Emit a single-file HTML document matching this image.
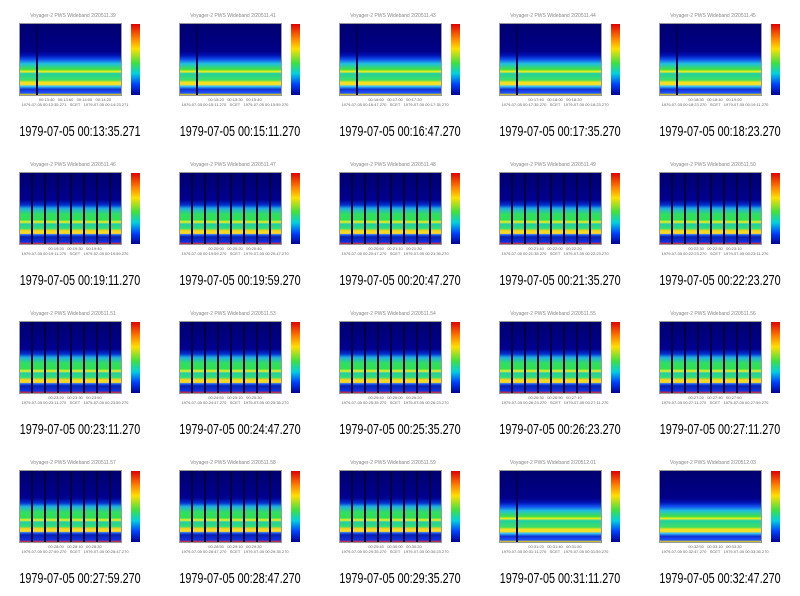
<!DOCTYPE html>
<html><head><meta charset="utf-8"><style>
body{margin:0;width:800px;height:596px;background:#fff;position:relative;overflow:hidden;font-family:"Liberation Sans",sans-serif}
.cell{position:absolute;width:160px;height:149px}
.t{position:absolute;top:13px;left:28px;width:90px;text-align:center;font-size:5px;color:#888;white-space:nowrap}
.p{position:absolute;left:20px;top:24px;width:101px;height:71px;outline:1px solid #999;
background:linear-gradient(to top,#f4e000 0%,#2050ff 3%,#1030d0 8%,#30c0ff 12%,#ffe020 15%,#f0e020 18%,#40e060 21%,#20d0a0 30%,#f0f020 33%,#40e040 36%,#20c0e0 44%,#1050f0 50%,#0010b0 56%,#000088 62%,#000070 100%)}
.p.b{background:
repeating-linear-gradient(to right,transparent 0,transparent 11px,#000040 11px,#000040 13px),
linear-gradient(to top,#e03030 0%,#1030e0 3%,#0820b0 10%,#2060ff 13%,#ffe020 15%,#f0d020 19%,#30e070 22%,#20d0a0 28%,#f0f020 31%,#30e050 34%,#30e060 42%,#20b0e0 50%,#0030d0 55%,#000090 62%,#000070 100%)}
.v{position:absolute;left:16px;top:0;width:2px;height:71px;background:#000050}
.c{position:absolute;left:131px;top:24px;width:9px;height:71px;background:linear-gradient(to bottom,#e00000,#ff8000 20%,#ffe000 35%,#40e040 55%,#00d0e0 70%,#0040ff 85%,#000090)}
.ax{position:absolute;left:10px;top:97px;width:130px;text-align:center;font-size:4px;color:#666;line-height:5px}
.yl{position:absolute;left:6px;top:40px;font-size:4px;color:#888;transform:rotate(-90deg);transform-origin:left top;top:75px}
.cap{position:absolute;top:123px;left:-20px;width:200px;text-align:center;font-size:15px;line-height:17px;color:#000;white-space:nowrap;transform:scaleX(0.72)}
</style></head><body>

<div class="cell" style="left:0;top:0"><div class="t">Voyager-2 PWS Wideband 2/20511.39</div><div class="p"><div class="v"></div></div><div class="c"></div><div class="ax">00:13:40 &nbsp; 00:13:60 &nbsp; 00:14:00 &nbsp; 00:14:20<br>1979-07-05 00:13:35.271 &nbsp; SCET &nbsp; 1979-07-05 00:14:23.271</div><div class="cap">1979-07-05 00:13:35.271</div></div>
<div class="cell" style="left:160px;top:0"><div class="t">Voyager-2 PWS Wideband 2/20511.41</div><div class="p"><div class="v"></div></div><div class="c"></div><div class="ax">00:15:20 &nbsp; 00:15:30 &nbsp; 00:15:40<br>1979-07-05 00:15:11.270 &nbsp; SCET &nbsp; 1979-07-05 00:15:59.270</div><div class="cap">1979-07-05 00:15:11.270</div></div>
<div class="cell" style="left:320px;top:0"><div class="t">Voyager-2 PWS Wideband 2/20511.43</div><div class="p"><div class="v"></div></div><div class="c"></div><div class="ax">00:16:60 &nbsp; 00:17:00 &nbsp; 00:17:20<br>1979-07-05 00:16:47.270 &nbsp; SCET &nbsp; 1979-07-05 00:17:35.270</div><div class="cap">1979-07-05 00:16:47.270</div></div>
<div class="cell" style="left:480px;top:0"><div class="t">Voyager-2 PWS Wideband 2/20511.44</div><div class="p"><div class="v"></div></div><div class="c"></div><div class="ax">00:17:40 &nbsp; 00:18:00 &nbsp; 00:18:20<br>1979-07-05 00:17:35.270 &nbsp; SCET &nbsp; 1979-07-05 00:18:23.270</div><div class="cap">1979-07-05 00:17:35.270</div></div>
<div class="cell" style="left:640px;top:0"><div class="t">Voyager-2 PWS Wideband 2/20511.45</div><div class="p"><div class="v"></div></div><div class="c"></div><div class="ax">00:18:30 &nbsp; 00:18:40 &nbsp; 00:19:00<br>1979-07-05 00:18:23.270 &nbsp; SCET &nbsp; 1979-07-05 00:19:11.270</div><div class="cap">1979-07-05 00:18:23.270</div></div>

<div class="cell" style="left:0;top:149px"><div class="t">Voyager-2 PWS Wideband 2/20511.46</div><div class="p b"></div><div class="c"></div><div class="ax">00:19:20 &nbsp; 00:19:30 &nbsp; 00:19:40<br>1979-07-05 00:19:11.270 &nbsp; SCET &nbsp; 1979-07-05 00:19:59.270</div><div class="cap">1979-07-05 00:19:11.270</div></div>
<div class="cell" style="left:160px;top:149px"><div class="t">Voyager-2 PWS Wideband 2/20511.47</div><div class="p b"></div><div class="c"></div><div class="ax">00:20:00 &nbsp; 00:20:20 &nbsp; 00:20:40<br>1979-07-05 00:19:59.270 &nbsp; SCET &nbsp; 1979-07-05 00:20:47.270</div><div class="cap">1979-07-05 00:19:59.270</div></div>
<div class="cell" style="left:320px;top:149px"><div class="t">Voyager-2 PWS Wideband 2/20511.48</div><div class="p b"></div><div class="c"></div><div class="ax">00:20:60 &nbsp; 00:21:10 &nbsp; 00:21:30<br>1979-07-05 00:20:47.270 &nbsp; SCET &nbsp; 1979-07-05 00:21:35.270</div><div class="cap">1979-07-05 00:20:47.270</div></div>
<div class="cell" style="left:480px;top:149px"><div class="t">Voyager-2 PWS Wideband 2/20511.49</div><div class="p b"></div><div class="c"></div><div class="ax">00:21:40 &nbsp; 00:22:00 &nbsp; 00:22:20<br>1979-07-05 00:21:35.270 &nbsp; SCET &nbsp; 1979-07-05 00:22:23.270</div><div class="cap">1979-07-05 00:21:35.270</div></div>
<div class="cell" style="left:640px;top:149px"><div class="t">Voyager-2 PWS Wideband 2/20511.50</div><div class="p b"></div><div class="c"></div><div class="ax">00:22:30 &nbsp; 00:22:50 &nbsp; 00:23:10<br>1979-07-05 00:22:23.270 &nbsp; SCET &nbsp; 1979-07-05 00:23:11.270</div><div class="cap">1979-07-05 00:22:23.270</div></div>

<div class="cell" style="left:0;top:298px"><div class="t">Voyager-2 PWS Wideband 2/20511.51</div><div class="p b"></div><div class="c"></div><div class="ax">00:23:20 &nbsp; 00:23:30 &nbsp; 00:23:50<br>1979-07-05 00:23:11.270 &nbsp; SCET &nbsp; 1979-07-05 00:23:59.270</div><div class="cap">1979-07-05 00:23:11.270</div></div>
<div class="cell" style="left:160px;top:298px"><div class="t">Voyager-2 PWS Wideband 2/20511.53</div><div class="p b"></div><div class="c"></div><div class="ax">00:24:50 &nbsp; 00:25:10 &nbsp; 00:25:30<br>1979-07-05 00:24:47.270 &nbsp; SCET &nbsp; 1979-07-05 00:25:35.270</div><div class="cap">1979-07-05 00:24:47.270</div></div>
<div class="cell" style="left:320px;top:298px"><div class="t">Voyager-2 PWS Wideband 2/20511.54</div><div class="p b"></div><div class="c"></div><div class="ax">00:25:40 &nbsp; 00:26:00 &nbsp; 00:26:20<br>1979-07-05 00:25:35.270 &nbsp; SCET &nbsp; 1979-07-05 00:26:23.270</div><div class="cap">1979-07-05 00:25:35.270</div></div>
<div class="cell" style="left:480px;top:298px"><div class="t">Voyager-2 PWS Wideband 2/20511.55</div><div class="p b"></div><div class="c"></div><div class="ax">00:26:30 &nbsp; 00:26:50 &nbsp; 00:27:10<br>1979-07-05 00:26:23.270 &nbsp; SCET &nbsp; 1979-07-05 00:27:11.270</div><div class="cap">1979-07-05 00:26:23.270</div></div>
<div class="cell" style="left:640px;top:298px"><div class="t">Voyager-2 PWS Wideband 2/20511.56</div><div class="p b"></div><div class="c"></div><div class="ax">00:27:20 &nbsp; 00:27:40 &nbsp; 00:27:50<br>1979-07-05 00:27:11.270 &nbsp; SCET &nbsp; 1979-07-05 00:27:59.270</div><div class="cap">1979-07-05 00:27:11.270</div></div>

<div class="cell" style="left:0;top:447px"><div class="t">Voyager-2 PWS Wideband 2/20511.57</div><div class="p b"></div><div class="c"></div><div class="ax">00:28:00 &nbsp; 00:28:10 &nbsp; 00:28:30<br>1979-07-05 00:27:59.270 &nbsp; SCET &nbsp; 1979-07-05 00:28:47.270</div><div class="cap">1979-07-05 00:27:59.270</div></div>
<div class="cell" style="left:160px;top:447px"><div class="t">Voyager-2 PWS Wideband 2/20511.58</div><div class="p b"></div><div class="c"></div><div class="ax">00:28:50 &nbsp; 00:29:10 &nbsp; 00:29:30<br>1979-07-05 00:28:47.270 &nbsp; SCET &nbsp; 1979-07-05 00:29:35.270</div><div class="cap">1979-07-05 00:28:47.270</div></div>
<div class="cell" style="left:320px;top:447px"><div class="t">Voyager-2 PWS Wideband 2/20511.59</div><div class="p b"></div><div class="c"></div><div class="ax">00:29:40 &nbsp; 00:30:00 &nbsp; 00:30:20<br>1979-07-05 00:29:35.270 &nbsp; SCET &nbsp; 1979-07-05 00:30:23.270</div><div class="cap">1979-07-05 00:29:35.270</div></div>
<div class="cell" style="left:480px;top:447px"><div class="t">Voyager-2 PWS Wideband 2/20512.01</div><div class="p"><div class="v"></div></div><div class="c"></div><div class="ax">00:31:20 &nbsp; 00:31:40 &nbsp; 00:31:50<br>1979-07-05 00:31:11.270 &nbsp; SCET &nbsp; 1979-07-05 00:31:59.270</div><div class="cap">1979-07-05 00:31:11.270</div></div>
<div class="cell" style="left:640px;top:447px"><div class="t">Voyager-2 PWS Wideband 2/20512.03</div><div class="p"></div><div class="c"></div><div class="ax">00:32:50 &nbsp; 00:33:10 &nbsp; 00:33:30<br>1979-07-05 00:32:47.270 &nbsp; SCET &nbsp; 1979-07-05 00:33:35.270</div><div class="cap">1979-07-05 00:32:47.270</div></div>

</body></html>
